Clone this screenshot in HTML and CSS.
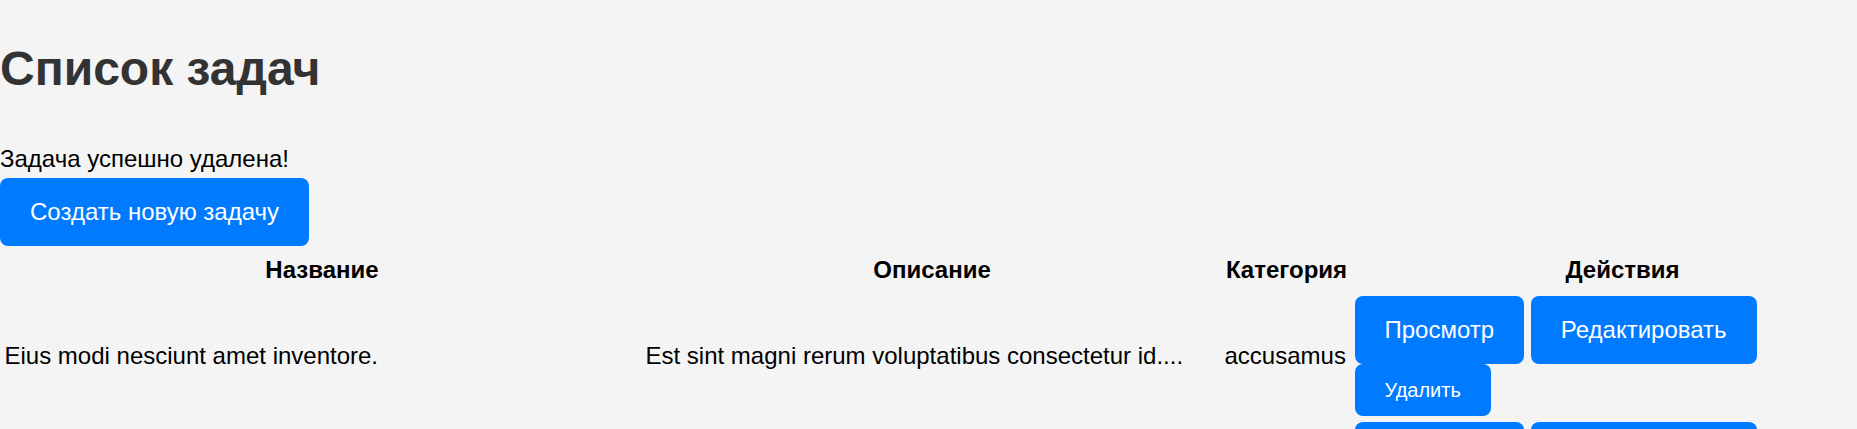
FILE: index.html
```html
<!DOCTYPE html>
<html lang="ru">
<head>
<meta charset="utf-8">
<title>Список задач</title>
<link rel="stylesheet" href="styles.css">
</head>
<body>
<h1 class="page-title">Список задач</h1>
<p class="message">Задача успешно удалена!</p>
<div class="toolbar"><a class="btn" href="#">Создать новую задачу</a></div>
<table class="tasks">
  <thead>
    <tr>
      <th class="col-name">Название</th>
      <th class="col-desc">Описание</th>
      <th class="col-cat">Категория</th>
      <th class="col-actions">Действия</th>
    </tr>
  </thead>
  <tbody>
    <tr>
      <td>Eius modi nesciunt amet inventore.</td>
      <td>Est sint magni rerum voluptatibus consectetur id....</td>
      <td>accusamus</td>
      <td><a class="btn" href="#">Просмотр</a> <a class="btn" href="#">Редактировать</a> <form class="inline-form"><button class="btn-delete" type="button">Удалить</button></form></td>
    </tr>
    <tr>
      <td>Quia voluptatem dolores sed.</td>
      <td>Aut facere quis dolorem ut quo aut....</td>
      <td>dolores</td>
      <td><a class="btn" href="#">Просмотр</a> <a class="btn" href="#">Редактировать</a> <form class="inline-form"><button class="btn-delete" type="button">Удалить</button></form></td>
    </tr>
  </tbody>
</table>
</body>
</html>
```

FILE: styles.css
```css
html, body {
  overflow-x: hidden;
}

body {
  margin: 0;
  background: #f4f4f4;
  color: #000;
  font-family: "Liberation Sans", Arial, sans-serif;
  font-size: 24px;
}

.page-title {
  margin: 41px 0 0;
  font-size: 48px;
  font-weight: bold;
  color: #333;
}

.message {
  margin: 49px 0 5px;
}

.btn {
  display: inline-block;
  padding: 20px 30px;
  line-height: 28px;
  background: #007bff;
  color: #fff;
  text-decoration: none;
  border-radius: 8px;
  font-size: 24px;
}

.inline-form {
  display: inline;
  margin: 0;
}

.btn-delete {
  font-family: "Liberation Sans", Arial, sans-serif;
  font-size: 20px;
  line-height: 22.5px;
  padding: 15px 30px;
  border: 0;
  border-radius: 8px;
  background: #007bff;
  color: #fff;
  cursor: pointer;
}

.tasks {
  table-layout: fixed;
  width: 1895px;
  border-spacing: 3px;
  margin: 0;
}

.tasks th,
.tasks td {
  box-sizing: border-box;
}

.tasks th {
  padding: 7px 1.5px;
  font-weight: bold;
  text-align: center;
  vertical-align: middle;
}

.tasks td {
  padding: 1.5px;
  text-align: left;
  vertical-align: middle;
}

.col-name { width: 638px; }
.col-desc { width: 576px; }
.col-cat { width: 127px; }
.col-actions { width: 539px; }
```
